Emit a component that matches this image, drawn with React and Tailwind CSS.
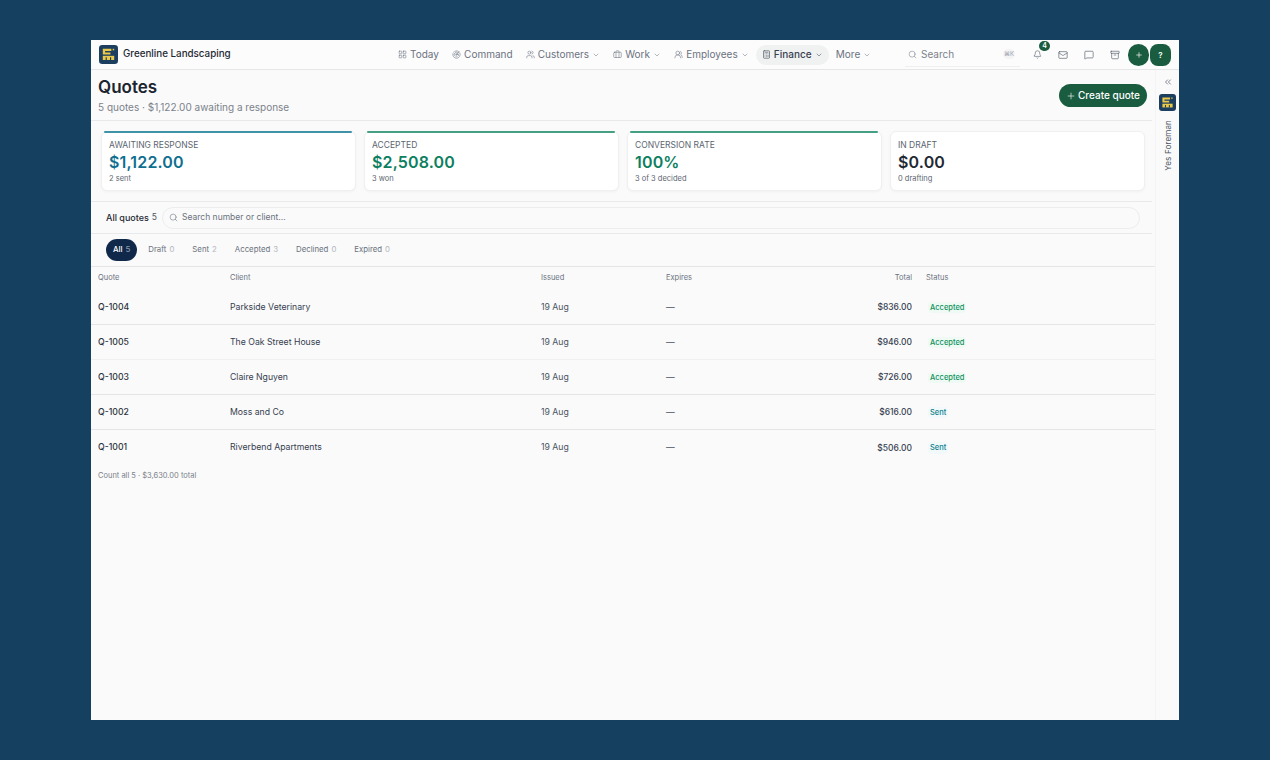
import { LayoutGrid, Radar, Users, Briefcase, ChevronDown, ChevronsLeft, Calculator, Search, Bell, Mail, MessageSquare, Archive, Plus, UsersRound } from "lucide-react";

const nav = [
  { label: "Today", icon: LayoutGrid },
  { label: "Command", icon: Radar },
  { label: "Customers", icon: Users, caret: true },
  { label: "Work", icon: Briefcase, caret: true },
  { label: "Employees", icon: UsersRound, caret: true },
  { label: "Finance", icon: Calculator, caret: true, active: true },
  { label: "More", caret: true },
];

const stats = [
  { title: "AWAITING RESPONSE", value: "$1,122.00", sub: "2 sent", color: "text-[#0f6f8f]", bar: "bg-[#3f93a8]" },
  { title: "ACCEPTED", value: "$2,508.00", sub: "3 won", color: "text-[#0d7f5f]", bar: "bg-[#45a083]" },
  { title: "CONVERSION RATE", value: "100%", sub: "3 of 3 decided", color: "text-[#0d7f5f]", bar: "bg-[#45a083]" },
  { title: "IN DRAFT", value: "$0.00", sub: "0 drafting", color: "text-[#1f2933]" },
];

const tabs = [
  { label: "All", n: 5, active: true },
  { label: "Draft", n: 0 },
  { label: "Sent", n: 2 },
  { label: "Accepted", n: 3 },
  { label: "Declined", n: 0 },
  { label: "Expired", n: 0 },
];

const rows = [
  { id: "Q-1004", client: "Parkside Veterinary", total: "$836.00", status: "Accepted" },
  { id: "Q-1005", client: "The Oak Street House", total: "$946.00", status: "Accepted" },
  { id: "Q-1003", client: "Claire Nguyen", total: "$726.00", status: "Accepted" },
  { id: "Q-1002", client: "Moss and Co", total: "$616.00", status: "Sent" },
  { id: "Q-1001", client: "Riverbend Apartments", total: "$506.00", status: "Sent" },
];

function Logo({ size }) {
  return (
    <svg width={size} height={size} viewBox="0 0 20 20" className="shrink-0">
      <rect width="20" height="20" rx="3.5" fill="#1c3f60" />
      <path d="M4 4h9v2.4H6.4v1.4H12v2.2H4z" fill="#e9c84a" />
      <path d="M14.4 4h1.6v1.6h-1.6z" fill="#e9c84a" />
      <path d="M4 11.4h12v4.4H4z" fill="#e9c84a" />
      <path d="M7 13h1.2v2.8H7zM11.6 13h1.2v2.8h-1.2z" fill="#1c3f60" />
    </svg>
  );
}

function Stat({ s }) {
  return (
    <div className="relative flex-1 h-[60px] bg-white rounded-md border border-[#f0f0f1] shadow-[0_1px_3px_rgba(0,0,0,0.04)] px-[7px] pt-[7px]">
      {s.bar && <span className={`absolute -top-px left-[2px] right-[3px] h-[2px] rounded-full ${s.bar}`} />}
      <div className="text-[8.5px] leading-[12px] text-[#5b6570]">{s.title}</div>
      <div className={`text-[16px] leading-[22px] font-semibold tracking-[0.01em] ${s.color}`}>{s.value}</div>
      <div className="mt-px text-[7.5px] leading-[10px] text-[#5b6570]">{s.sub}</div>
    </div>
  );
}

export default function App() {
  return (
    <div className="w-[1270px] h-[760px] bg-[#15405f] pt-[40px] pl-[91px] overflow-hidden font-['Inter',sans-serif]">
      <div className="w-[1088px] h-[680px] bg-[#fafafa] flex flex-col">
        {/* top bar */}
        <div className="h-[30px] shrink-0 flex items-center border-b border-[#e5e6e7] bg-[#fcfcfc]">
          <div className="w-[301px] flex items-center gap-[5px] pl-[8px]">
            <Logo size={19} />
            <span className="text-[9.8px] font-medium text-[#1f2933]">Greenline Landscaping</span>
          </div>
          <div className="flex items-center text-[10px] text-[#6b7280]">
            {nav.map((n) => (
              <div key={n.label} className={`flex items-center gap-[3px] h-[20px] px-[6px] mr-[1.2px] rounded-full ${n.active ? "bg-[#f0f1f1] text-[#374151] font-medium" : ""}`}>
                {n.icon && <n.icon size={9} strokeWidth={1.5} />}
                <span>{n.label}</span>
                {n.caret && <ChevronDown size={8} strokeWidth={1.5} />}
              </div>
            ))}
          </div>
          <div className="ml-auto pr-[8px] flex items-center">
            <div className="w-[115px] h-[24px] flex items-center gap-[4px] pl-[3px] pr-[5px] text-[10px] text-[#7b828a] border-b border-[#eeeff0]">
              <Search size={9} strokeWidth={1.5} />
              <span className="flex-1">Search</span>
              <span className="w-[12px] h-[10px] rounded-full bg-[#f4f4f5] text-[6px] leading-[10px] text-center text-[#9ca3af]">⌘K</span>
            </div>
            <div className="flex items-center ml-[4px] text-[#4b5563]">
              <div className="relative w-[26px] flex justify-center">
                <Bell size={9} strokeWidth={1.5} />
                <span className="absolute -top-[9px] left-[15px] w-[11px] h-[10px] rounded-full bg-[#1a5c3f] text-white text-[7px] font-semibold leading-[10px] text-center">4</span>
              </div>
              <div className="w-[26px] flex justify-center"><Mail size={10} strokeWidth={1.5} /></div>
              <div className="w-[26px] flex justify-center"><MessageSquare size={10} strokeWidth={1.5} /></div>
              <div className="w-[26px] flex justify-center"><Archive size={10} strokeWidth={1.5} /></div>
            </div>
            <div className="flex items-center gap-px">
              <div className="w-[21px] h-[22px] rounded-full bg-[#1a5c3f] text-white flex items-center justify-center"><Plus size={8} strokeWidth={2} /></div>
              <div className="w-[21px] h-[22px] rounded-lg bg-[#1a5c3f] text-white text-[8px] font-semibold flex items-center justify-center">?</div>
            </div>
          </div>
        </div>

        <div className="flex-1 flex min-h-0">
          {/* main */}
          <div className="w-[1064px] flex flex-col">
            <div className="h-[51px] shrink-0 flex items-start justify-between pl-[7px] pr-[5px] border-b border-[#e8e9ea] mr-[3px]">
              <div>
                <h1 className="text-[17px] leading-[22px] mt-[6px] font-semibold text-[#1a2530]">Quotes</h1>
                <p className="text-[10px] leading-[14px] mt-[2px] text-[#7b828a]">5 quotes · $1,122.00 awaiting a response</p>
              </div>
              <button className="mt-[14px] h-[23px] w-[88px] rounded-full bg-[#1a5c3f] text-white text-[10px] font-medium flex items-center justify-center gap-[2px]">
                <Plus size={10} strokeWidth={1.5} />Create quote
              </button>
            </div>

            <div className="h-[81px] shrink-0 flex gap-[8px] pt-[10px] pl-[10px] pr-[7px] border-b border-[#e8e9ea] mr-[3px]">
              {stats.map((s) => <Stat key={s.title} s={s} />)}
            </div>

            <div className="h-[32px] shrink-0 flex items-center pl-[15px] pr-[12px] border-b border-[#e8e9ea] mr-[3px]">
              <span className="text-[9px] font-medium text-[#1f2933]">All quotes</span>
              <span className="text-[8.5px] text-[#4b5563] ml-[3px]">5</span>
              <div className="flex-1 h-[22px] ml-[5px] rounded-full border border-[#eceded] flex items-center gap-[4px] pl-[6px] text-[8.5px] text-[#6b7280]">
                <Search size={9} strokeWidth={1.5} />
                Search number or client...
              </div>
            </div>

            <div className="h-[33px] shrink-0 flex items-center pl-[15px] border-b border-[#e4e5e6]">
              {tabs.map((t) => (
                <div key={t.label} className={`h-[22px] flex items-center gap-[3px] px-[7px] mr-[4px] rounded-full text-[7.8px] ${t.active ? "bg-[#10294a] text-white font-medium" : "text-[#6b7280]"}`}>
                  {t.label}
                  <span className={t.active ? "text-[#8b9ab0]" : "text-[#b3b8bd]"}>{t.n}</span>
                </div>
              ))}
            </div>

            <div className="h-[23px] pb-[2px] shrink-0 grid grid-cols-[132px_311px_125px_246px_1fr] items-center pl-[7px] text-[7.5px] text-[#6b7280]">
              <span>Quote</span>
              <span>Client</span>
              <span>Issued</span>
              <span>Expires</span>
              <div className="flex">
                <span className="w-0 flex justify-end"><span>Total</span></span>
                <span className="ml-[14px]">Status</span>
              </div>
            </div>

            {rows.map((r, i) => (
              <div key={r.id} className={`h-[35px] shrink-0 grid grid-cols-[132px_311px_125px_246px_1fr] items-center pl-[7px] text-[8.7px] text-[#4b5563] ${i === 4 ? "pt-px" : i === 1 ? "pt-px border-b border-[#f0f0f1]" : "pt-px border-b border-[#e4e5e6]"}`}>
                <span className="font-[450] text-[#2b3440]">{r.id}</span>
                <span className="text-[#374151]">{r.client}</span>
                <span>19 Aug</span>
                <span>—</span>
                <div className="flex items-center">
                  <span className="w-0 flex justify-end text-[8.5px] font-medium text-[#374151]"><span>{r.total}</span></span>
                  <span className={`ml-[16px] px-[2px] rounded text-[7.5px] font-medium ${r.status === "Sent" ? "bg-[#f1f9fa] text-[#0f7f8f]" : "bg-[#f0faf5] text-[#12925f]"}`}>{r.status}</span>
                </div>
              </div>
            ))}

            <div className="pl-[7px] mt-[5px] text-[7.5px] leading-[12px] text-[#7b828a]">Count all 5 · $3,630.00 total</div>
          </div>

          {/* right rail */}
          <div className="w-[24px] border-l border-[#f4f4f5] flex flex-col items-center pt-[7px]">
            <ChevronsLeft size={10} strokeWidth={1.5} className="text-[#374151]" />
            <div className="mt-[7px]"><Logo size={17} /></div>
            <span className="mt-[9px] text-[8px] text-[#4b5563] tracking-[0.02em] [writing-mode:vertical-rl] rotate-180">Yes Foreman</span>
          </div>
        </div>
      </div>
    </div>
  );
}
